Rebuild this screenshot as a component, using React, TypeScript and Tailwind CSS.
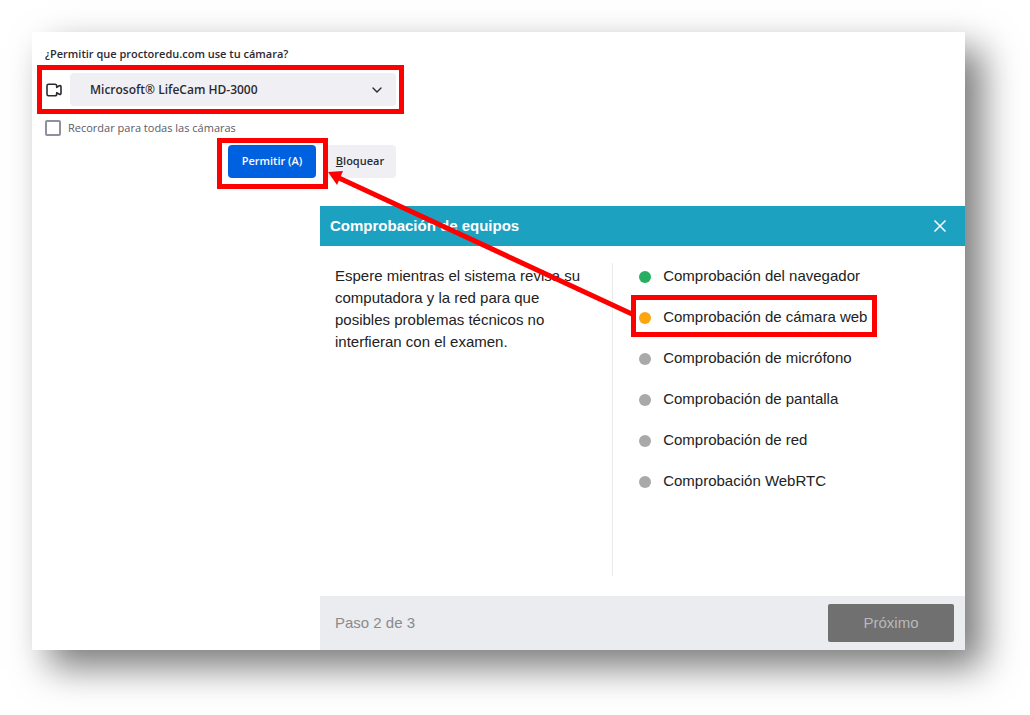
import React, { useState } from 'react';

type Check = {
  label: string;
  color: string;
  active?: boolean;
};

const checks: Check[] = [
  { label: 'Comprobación del navegador', color: 'bg-[#27ae60]' },
  { label: 'Comprobación de cámara web', color: 'bg-[#fba50f]', active: true },
  { label: 'Comprobación de micrófono', color: 'bg-[#a9a9a9]' },
  { label: 'Comprobación de pantalla', color: 'bg-[#a9a9a9]' },
  { label: 'Comprobación de red', color: 'bg-[#a9a9a9]' },
  { label: 'Comprobación WebRTC', color: 'bg-[#a9a9a9]' },
];

const CameraIcon = () => (
  <svg viewBox="0 0 16 14" className="w-4 h-[14px] shrink-0" fill="none" stroke="#2b2a33" strokeWidth="1.6" strokeLinejoin="round">
    <path d="M2.5 1.2H9Q10.7 1.2 10.7 3V4.4L13.3 2.8Q15 2.2 15 3.8V10.2Q15 11.8 13.3 11.2L10.7 9.6V11Q10.7 12.8 9 12.8H2.5Q1 12.8 1 11.2V2.8Q1 1.2 2.5 1.2Z" />
  </svg>
);

const PermissionPrompt = () => {
  const [remember, setRemember] = useState<boolean>(false);

  return (
    <section className="w-[372px] pl-[5px] pt-3 font-['Open_Sans',sans-serif] text-[11px] text-[#2b2a33]">
      <label htmlFor="camera" className="block pl-2 leading-5 font-semibold">
        ¿Permitir que proctoredu.com use tu cámara?
      </label>
      <div className="flex items-center gap-2 h-[49px] mt-px pl-1 pr-[3px] border-5 border-[#ff0000]">
        <CameraIcon />
        <div className="relative flex-1">
          <select
            id="camera"
            className="w-full h-[33px] pl-5 pr-8 rounded bg-[#f0f0f4] text-xs font-semibold appearance-none"
          >
            <option>Microsoft® LifeCam HD-3000</option>
          </select>
          <svg
            viewBox="0 0 10 6"
            className="absolute right-[14px] top-[14px] w-[10px] h-[6px] pointer-events-none"
            fill="none"
            stroke="#2b2a33"
            strokeWidth="1.4"
            strokeLinecap="round"
          >
            <path d="M1 1L5 5L9 1" />
          </svg>
        </div>
      </div>
      <label className="flex items-center gap-[7px] h-7 pl-2 text-[#5b5b66]">
        <input
          type="checkbox"
          className="size-4 rounded-xs border-2 border-[#8f8f9d] appearance-none checked:bg-[#0061e0]"
          checked={remember}
          onChange={(e) => setRemember(e.target.checked)}
        />
        Recordar para todas las cámaras
      </label>
      <div className="flex justify-end gap-2 mt-[3px] pr-2 font-semibold">
        <div className="relative w-[88px]">
          <button type="button" className="w-full h-[33px] rounded bg-[#0061e0] text-[#fbfbfe]">
            Permitir (A)
          </button>
          <div className="absolute -left-[11px] -right-3 -top-[7px] -bottom-[11px] border-5 border-[#ff0000] pointer-events-none" />
        </div>
        <button type="button" className="w-[72px] h-[33px] rounded bg-[#f0f0f4]">
          <span className="underline">B</span>loquear
        </button>
      </div>
    </section>
  );
};

const EquipmentCheck = () => (
  <section className="flex flex-col flex-1 ml-72 mt-7 text-[15px] text-[#222222]">
    <header className="flex items-center justify-between h-10 pl-[10px] pr-[18px] bg-[#1da1c1] text-white">
      <h1 className="font-bold">Comprobación de equipos</h1>
      <button type="button" aria-label="Cerrar">
        <svg viewBox="0 0 14 14" className="size-[14px]" stroke="currentColor" strokeWidth="1.5">
          <path d="M1.5 1.5L12.5 12.5M12.5 1.5L1.5 12.5" />
        </svg>
      </button>
    </header>
    <div className="flex h-[350px]">
      <div className="w-5/11 mt-[17px] mb-5 pl-[15px] pr-8 border-r border-[#ebebeb]">
        <p className="leading-[22px] pt-[2px]">
          Espere mientras el sistema revisa su computadora y la red para que posibles problemas técnicos no
          interfieran con el examen.
        </p>
      </div>
      <ul className="flex-1 pt-[10px] pl-[26px]">
        {checks.map((check) => (
          <li key={check.label} className="flex items-center h-[41px]">
            <div className="relative flex items-center gap-3">
              <span className={`size-3 rounded-full ${check.color}`} />
              {check.label}
              {check.active && (
                <div className="absolute -left-2 -right-[10px] -top-[11px] -bottom-2 border-5 border-[#ff0000] pointer-events-none" />
              )}
            </div>
          </li>
        ))}
      </ul>
    </div>
    <footer className="flex items-center justify-between h-[54px] pl-[15px] pr-[11px] bg-[#ebecf0]">
      <span className="text-[#8a8a8a]">Paso 2 de 3</span>
      <button type="button" className="w-[126px] h-[38px] rounded-xs bg-[#707070] text-[#b9b9b9]" disabled>
        Próximo
      </button>
    </footer>
  </section>
);

const App = () => {
  return (
    <div className="min-h-screen bg-white pt-8 pl-8 pr-[65px] pb-[65px] font-['Liberation_Sans',sans-serif]">
      <main className="relative flex flex-col bg-white shadow-[17px_17px_35px_rgba(0,0,0,0.53)]">
        <PermissionPrompt />
        <EquipmentCheck />
        {/* arrow from the camera check to the allow button */}
        <svg
          viewBox="0 0 306 146"
          className="absolute left-[295px] top-[139px] w-[306px] h-[146px] pointer-events-none"
        >
          <path d="M12 7L305 143" stroke="#ff0000" strokeWidth="5" />
          <path d="M1 1L16 0L10 14Z" fill="#ff0000" />
        </svg>
      </main>
    </div>
  );
};

export default App;
